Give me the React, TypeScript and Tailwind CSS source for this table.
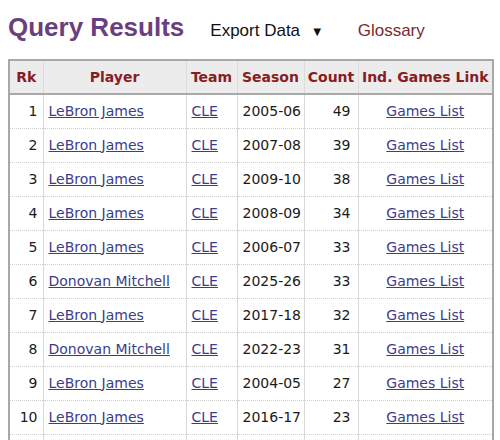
import React from "react";

const rows = [
  { rk: 1, player: "LeBron James", team: "CLE", season: "2005-06", count: 49 },
  { rk: 2, player: "LeBron James", team: "CLE", season: "2007-08", count: 39 },
  { rk: 3, player: "LeBron James", team: "CLE", season: "2009-10", count: 38 },
  { rk: 4, player: "LeBron James", team: "CLE", season: "2008-09", count: 34 },
  { rk: 5, player: "LeBron James", team: "CLE", season: "2006-07", count: 33 },
  { rk: 6, player: "Donovan Mitchell", team: "CLE", season: "2025-26", count: 33 },
  { rk: 7, player: "LeBron James", team: "CLE", season: "2017-18", count: 32 },
  { rk: 8, player: "Donovan Mitchell", team: "CLE", season: "2022-23", count: 31 },
  { rk: 9, player: "LeBron James", team: "CLE", season: "2004-05", count: 27 },
  { rk: 10, player: "LeBron James", team: "CLE", season: "2016-17", count: 23 },
];

export default function App() {
  return (
    <div className="w-[500px] h-[440px] overflow-hidden bg-white px-2 pt-[8px]">
      {/* heading */}
      <div className="flex items-baseline h-[44px]">
        <h1 className="font-['Liberation_Sans',Arial,sans-serif] font-bold text-[26px] leading-[38px] text-[#6b3f7d]">
          Query Results
        </h1>
        <span className="ml-[26px] font-['Liberation_Sans',Arial,sans-serif] text-[17px] text-[#111]">
          Export Data <span className="text-[13px] ml-[6px]">▼</span>
        </span>
        <span className="ml-[34px] font-['Liberation_Sans',Arial,sans-serif] text-[17px] text-[#7a2a2e]">
          Glossary
        </span>
      </div>

      <table className="mt-[7px] w-[484px] table-fixed border-collapse border-2 border-[#a8a8a8] font-['DejaVu_Sans',Verdana,sans-serif] text-[14px]">
        <colgroup>
          <col className="w-[34px]" />
          <col className="w-[143px]" />
          <col className="w-[51px]" />
          <col className="w-[67px]" />
          <col className="w-[54px]" />
          <col className="w-[135px]" />
        </colgroup>
        <thead>
          <tr className="h-[34px] bg-[#ececec] text-[#8a1c1f] border-b-2 border-[#a8a8a8]">
            <th className="border-r border-[#dcdcdc] text-center font-bold">Rk</th>
            <th className="border-r border-[#dcdcdc] text-center font-bold">Player</th>
            <th className="border-r border-[#dcdcdc] text-center font-bold">Team</th>
            <th className="border-r border-[#dcdcdc] text-center font-bold">Season</th>
            <th className="border-r border-[#dcdcdc] text-center font-bold">Count</th>
            <th className="text-center font-bold whitespace-nowrap">Ind. Games Link</th>
          </tr>
        </thead>
        <tbody className="text-[#1a1a1a]">
          {rows.map((r) => (
            <tr key={r.rk} className="h-[34px] border-b border-dotted border-[#cfcfcf]">
              <td className="border-r border-[#d8d8d8] text-right pr-[5px]">{r.rk}</td>
              <td className="border-r border-[#d8d8d8] pl-[5px] whitespace-nowrap">
                <a href="#" className="text-[#3c3c8a] underline">{r.player}</a>
              </td>
              <td className="border-r border-[#d8d8d8] pl-[5px]">
                <a href="#" className="text-[#3c3c8a] underline">{r.team}</a>
              </td>
              <td className="border-r border-[#d8d8d8] pl-[5px]">{r.season}</td>
              <td className="border-r border-[#d8d8d8] text-right pr-[7px]">{r.count}</td>
              <td className="text-center">
                <a href="#" className="text-[#3c3c8a] underline">Games List</a>
              </td>
            </tr>
          ))}
          <tr className="h-[34px]">
            <td className="border-r border-[#d8d8d8]"></td>
            <td className="border-r border-[#d8d8d8]"></td>
            <td className="border-r border-[#d8d8d8]"></td>
            <td className="border-r border-[#d8d8d8]"></td>
            <td className="border-r border-[#d8d8d8]"></td>
            <td></td>
          </tr>
        </tbody>
      </table>
    </div>
  );
}
